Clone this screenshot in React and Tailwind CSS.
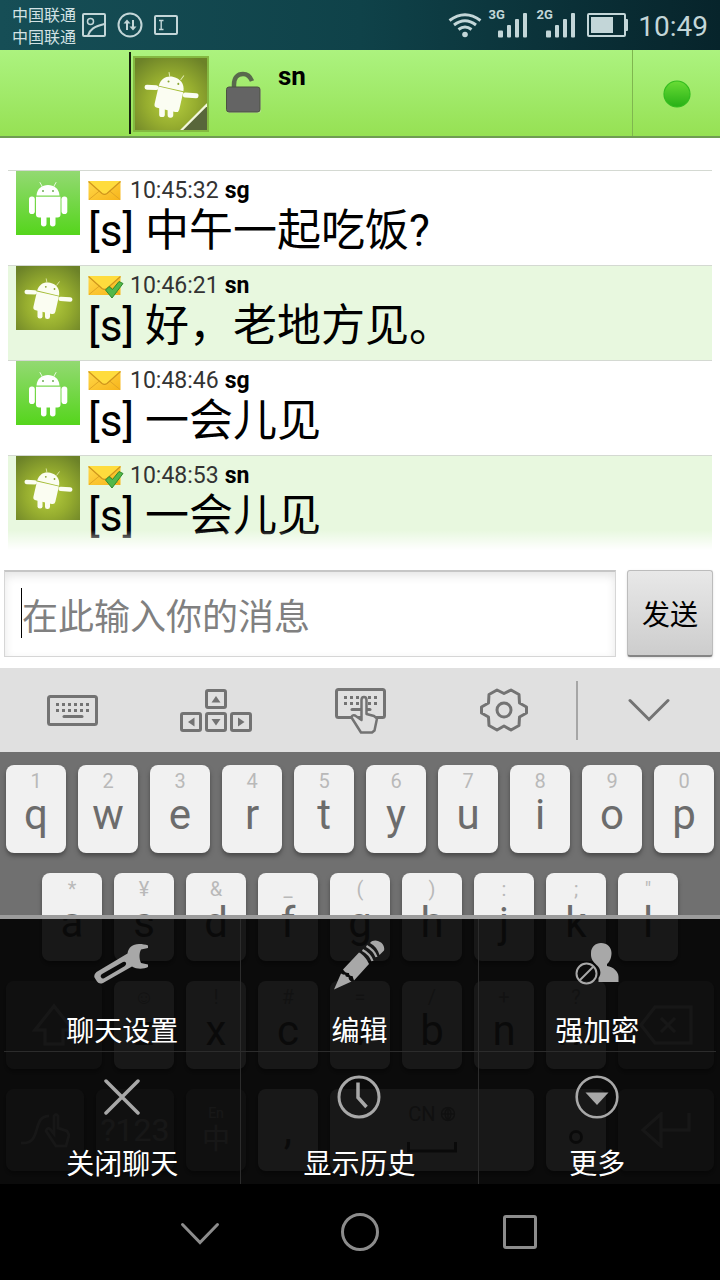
import React from "react";

const messages = [
  { time: "10:45:32", from: "sg", text: "[s] 中午一起吃饭?" },
  { time: "10:46:21", from: "sn", text: "[s] 好，老地方见。" },
  { time: "10:48:46", from: "sg", text: "[s] 一会儿见" },
  { time: "10:48:53", from: "sn", text: "[s] 一会儿见" },
];

const rowOne = [["q", "1"], ["w", "2"], ["e", "3"], ["r", "4"], ["t", "5"], ["y", "6"], ["u", "7"], ["i", "8"], ["o", "9"], ["p", "0"]];
const rowTwo = [["a", "*"], ["s", "¥"], ["d", "&"], ["f", "_"], ["g", "("], ["h", ")"], ["j", ":"], ["k", ";"], ["l", '"']];
const rowThree = [["z", "☺"], ["x", "!"], ["c", "#"], ["v", "="], ["b", "/"], ["n", "+"], ["m", "?"]];

function GreenRobot() {
  return (
    <svg viewBox="0 0 64 64" className="size-16 shrink-0" aria-hidden="true">
      <defs>
        <linearGradient id="lime" x1="0" y1="0" x2="0" y2="1">
          <stop offset="0" stopColor="#93d972" />
          <stop offset="1" stopColor="#55d51c" />
        </linearGradient>
      </defs>
      <rect width="64" height="64" fill="url(#lime)" />
      <g fill="#fff">
        <path d="M20.500 24.500C21 17.500 26 14 32 14s11 3.500 11.500 10.500z" />
        <path d="M20 25.800h24.500v17.700a3 3 0 0 1-3 3H23a3 3 0 0 1-3-3z" />
        <rect x="13" y="25.500" width="5.800" height="17.500" rx="2.800" />
        <rect x="45.500" y="25.500" width="5.800" height="17.500" rx="2.800" />
        <rect x="25" y="42" width="5.500" height="13.500" rx="2.700" />
        <rect x="34" y="42" width="5.500" height="13.500" rx="2.700" />
      </g>
      <path d="M26.500 16l-2.500-4.500M37.500 16l2.500-4.500" stroke="#e9f9df" strokeWidth="1" strokeLinecap="round" />
      <circle cx="27" cy="20" r="1" fill="#6fae55" />
      <circle cx="37" cy="20" r="1" fill="#6fae55" />
    </svg>
  );
}

function OliveRobot({ className, id, corner }) {
  return (
    <svg viewBox="0 0 64 64" className={className} aria-hidden="true">
      <defs>
        <radialGradient id={id} cx="0.5" cy="0.6" r="0.7">
          <stop offset="0" stopColor="#b8d040" />
          <stop offset="0.5" stopColor="#96ad2f" />
          <stop offset="1" stopColor="#6c8228" />
        </radialGradient>
      </defs>
      <rect width="64" height="64" fill={`url(#${id})`} />
      <g transform="rotate(13 31 33)" fill="#fbfdf2">
        <path d="M19.500 27c.5-7 5-10.500 11-10.500S41.500 20 42 27z" />
        <path d="M19.500 27.900H42V43.500a3 3 0 0 1-3 3H22.500a3 3 0 0 1-3-3z" />
      </g>
      <g fill="#fbfdf2">
        <rect x="21.500" y="41" width="5" height="11.500" rx="2.300" />
        <rect x="29" y="42" width="5" height="11" rx="2.300" />
        <rect x="8.500" y="24" width="12.500" height="4.300" rx="2.100" transform="rotate(2 15 26)" />
        <rect x="42.500" y="31" width="14" height="4.500" rx="2.200" transform="rotate(4 50 33)" />
      </g>
      <circle cx="29.800" cy="20.800" r="0.900" fill="#8aa532" />
      <circle cx="38.500" cy="23" r="0.900" fill="#8aa532" />
      <path d="M31 17l-.8-4.500M40.500 19.500l3-4" stroke="#dfe9b0" strokeWidth="0.900" />
      {corner && (
        <g>
          <path d="M64 42L42 64h22z" fill="#58663a" />
          <path d="M64.500 41L41 64.500" stroke="#f2f7dc" strokeWidth="2" />
        </g>
      )}
    </svg>
  );
}

function Envelope({ checked }) {
  return (
    <svg viewBox="0 0 36 26" className="h-[26px] w-9 shrink-0" aria-hidden="true">
      <defs>
        <linearGradient id="gold" x1="0" y1="0" x2="1" y2="1">
          <stop offset="0" stopColor="#ffd84a" />
          <stop offset="1" stopColor="#f7b51a" />
        </linearGradient>
      </defs>
      <rect x="0.500" y="3" width="32" height="19" fill="url(#gold)" />
      <path d="M1 21.500L12 12.500M32 21.500L21 12.500" stroke="#e0a524" strokeWidth="1" />
      <path d="M0.500 3h32L18.500 15.500q-2 1.500-4 0z" fill="#ffdc3d" />
      <path d="M0.500 3.500L14 15.500q2.500 1.800 5 0L32.500 3.500" fill="none" stroke="#cf961c" strokeWidth="1.200" />
      {checked && (
        <path d="M17.500 17l3.500-3.500 3.500 3 6.500-8 4 2-11 14.500z" fill="#52b84a" stroke="#2f8a2e" strokeWidth="1" />
      )}
    </svg>
  );
}

function StatusBar() {
  return (
    <div className="flex h-[50px] items-center bg-linear-to-r from-[#164e56] via-[#0f4249] to-[#07242b] pr-3 pl-3 text-[#c3d6d8]">
      <div className="font-['Noto_Sans_CJK_SC',sans-serif] text-base leading-[22px] text-[#d3e2e4]">
        <div>中国联通</div>
        <div>中国联通</div>
      </div>
      <svg viewBox="82 8 98 34" className="ml-1.5 h-[34px] w-[98px]" fill="none" stroke="currentColor" strokeWidth="2" aria-hidden="true">
        <rect x="83" y="14" width="22" height="22" rx="1" />
        <circle cx="90.500" cy="21.500" r="3" strokeWidth="1.500" />
        <path d="M88 35.500c2-6 6-9 16.500-11.500" />
        <circle cx="130" cy="25" r="11.500" />
        <path d="M127 30v-8M133 20v8" />
        <path d="M123.500 23.500l3.500-4 3.500 4zM129.500 26.500l3.500 4 3.500-4z" fill="currentColor" stroke="none" />
        <rect x="155" y="16" width="22" height="18" rx="1" />
        <path d="M159 20.500h4.500M159 29.500h4.500M161.200 20.500v9" strokeWidth="1.400" />
      </svg>
      <svg viewBox="446 8 184 34" className="ml-auto h-[34px] w-[184px]" fill="none" stroke="currentColor" aria-hidden="true">
        <g strokeWidth="3">
          <path d="M449.500 20.500q15.500-11.500 31 0" />
          <path d="M454 25q11-8.500 22 0" />
          <path d="M458.500 29.500q6.500-5 13 0" />
        </g>
        <g fill="currentColor" stroke="none">
          <circle cx="465" cy="34.500" r="2.800" />
          <rect x="498" y="30.500" width="5" height="7" rx="1" />
          <rect x="507" y="25" width="4" height="12.500" rx="1" />
          <rect x="515" y="19" width="4" height="18.500" rx="1" />
          <rect x="523" y="13" width="4" height="24.500" rx="1" />
          <rect x="546" y="30.500" width="5" height="7" rx="1" />
          <rect x="555" y="25" width="4" height="12.500" rx="1" />
          <rect x="563" y="19" width="4" height="18.500" rx="1" />
          <rect x="571" y="13" width="4" height="24.500" rx="1" />
          <rect x="591" y="17" width="22" height="16" />
          <rect x="625" y="19" width="3" height="12" rx="1" />
          <text x="488.500" y="19" className="font-[Roboto] text-[13px] font-bold">3G</text>
          <text x="536.500" y="19" className="font-[Roboto] text-[13px] font-bold">2G</text>
        </g>
        <rect x="588" y="14" width="37" height="22" rx="1" strokeWidth="2" />
      </svg>
      <div className="mt-1 ml-2 text-[28px] leading-[34px]">10:49</div>
    </div>
  );
}

function ChatHeader() {
  return (
    <header className="flex h-[88px] border-b-2 border-[#6f9c52] bg-linear-to-b from-[#acf37f] to-[#96e153]">
      <div className="my-0.5 w-[131px] border-r-2 border-[#16240d]" />
      <div className="flex flex-1 items-start pl-0.5">
        <div className="mt-1.5 border-2 border-[#84b941]">
          <OliveRobot id="oliveHead" className="size-[72px]" corner />
        </div>
        <svg viewBox="224 70 40 46" className="mt-5 ml-[15px] h-[46px] w-10" aria-hidden="true">
          <path d="M234 89v-4.500c0-7 3.500-10.500 9-10.500 4 0 7 2 9 7" fill="none" stroke="#59694c" strokeWidth="4.500" strokeLinecap="butt" />
          <rect x="227" y="88" width="34" height="25" rx="2.500" fill="#b9e58e" />
          <rect x="226.500" y="87" width="33.500" height="25" rx="2.500" fill="#646464" stroke="#4b5240" strokeWidth="1" />
        </svg>
        <h1 className="mt-[11px] ml-3.5 text-[26px] leading-[30px] font-bold text-black">sn</h1>
      </div>
      <div className="flex w-[88px] items-center justify-center border-l border-[#7fb64f]">
        <svg viewBox="0 0 28 28" className="mt-0.5 size-7" role="img" aria-label="在线">
          <defs>
            <linearGradient id="dot" x1="0" y1="0" x2="0" y2="1">
              <stop offset="0" stopColor="#69dc35" />
              <stop offset="1" stopColor="#27b016" />
            </linearGradient>
          </defs>
          <circle cx="14" cy="14" r="13" fill="url(#dot)" stroke="#33bd1f" strokeWidth="1.200" />
        </svg>
      </div>
    </header>
  );
}

function Messages() {
  return (
    <main className="flex-1 px-2 pt-8 pb-5">
      <ul className="relative">
        {messages.map((m, i) => (
          <li key={m.time} className={`flex border-t border-[#d4d9d2] pb-[9px] pl-2 ${m.from === "sn" ? "bg-[#e8f8df]" : "bg-white"}`}>
            {m.from === "sn" ? <OliveRobot id={`olive${i}`} className="size-16 shrink-0" /> : <GreenRobot />}
            <div className="pt-[5px] pl-2 text-black">
              <div className="flex h-[30px] items-center gap-1.5 text-[23px] leading-[30px]">
                <Envelope checked={m.from === "sn"} />
                <time className="text-[#333]">{m.time}</time>
                <b>{m.from}</b>
              </div>
              <p className="text-[44px] leading-[50px]">{m.text}</p>
            </div>
          </li>
        ))}
        <li aria-hidden="true" className="absolute inset-x-0 bottom-0 h-5 bg-linear-to-b from-white/0 to-white" />
      </ul>
    </main>
  );
}

function Composer() {
  return (
    <form className="flex gap-[11px] pr-[7px] pb-[11px] pl-1" onSubmit={(e) => e.preventDefault()}>
      <div className="relative flex flex-1">
        <input
          type="text"
          aria-label="消息"
          placeholder="在此输入你的消息"
          className="h-[87px] w-full border border-t-2 border-[#d6d6d6] border-t-[#c6c6c6] bg-white pl-[17px] font-['Noto_Sans_CJK_SC',sans-serif] text-4xl text-black caret-transparent shadow-[inset_0_4px_10px_#e6e6e6] outline-none placeholder:text-[#808080]"
        />
        <span className="absolute top-[18px] left-[17px] h-[50px] w-px bg-black" />
      </div>
      <button type="submit" className="h-[87px] w-[86px] rounded-[3px] border border-[#bcbcbc] border-b-2 border-b-[#858585] bg-linear-to-b from-[#e8e8e8] to-[#cdcdcd] font-['Noto_Sans_CJK_SC',sans-serif] text-[28px] text-black shadow-sm">
        发送
      </button>
    </form>
  );
}

function KeyboardDots() {
  const dots = [];
  for (let r = 0; r < 2; r++) for (let c = 0; c < 6; c++) dots.push(<rect key={`${r}-${c}`} x={9 + c * 6} y={8 + r * 6} width="3" height="3" fill="#737373" stroke="none" />);
  return (
    <g>
      <rect x="1.500" y="1.500" width="48" height="28" rx="2" />
      {dots}
      <path d="M17 21.500h18" strokeLinecap="round" />
    </g>
  );
}

const toolButton = "flex h-[84px] flex-1 items-center justify-center";

function Toolbar() {
  return (
    <div className="flex bg-[#e0e0e0]">
      <button className={toolButton} aria-label="键盘">
        <svg viewBox="0 0 51 31" className="h-[31px] w-[51px]" fill="none" stroke="#737373" strokeWidth="3"><KeyboardDots /></svg>
      </button>
      <button className={toolButton} aria-label="光标">
        <svg viewBox="0 0 72 44" className="h-11 w-[72px]" fill="none" stroke="#737373" strokeWidth="3">
          <rect x="26.500" y="2.500" width="19" height="17" rx="1.500" />
          <rect x="1.500" y="25.500" width="19" height="17" rx="1.500" />
          <rect x="26.500" y="25.500" width="19" height="17" rx="1.500" />
          <rect x="51.500" y="25.500" width="19" height="17" rx="1.500" />
          <g fill="#737373" stroke="none">
            <path d="M31.500 14.500h9L36 8z" />
            <path d="M31.500 31h9L36 37.500z" />
            <path d="M14.500 29.500v9L8 34z" />
            <path d="M58 29.500v9l6.500-4.500z" />
          </g>
        </svg>
      </button>
      <button className={toolButton} aria-label="手写">
        <svg viewBox="0 0 51 47" className="mt-0.5 h-[47px] w-[51px]" fill="none" stroke="#737373" strokeWidth="3">
          <KeyboardDots />
          <path d="M26 44.500L16.500 29.500Q17 26.500 20 27.500L26.500 32V12q0-3 2.500-3t2.500 3v14l7.500 2 3 2.500-2.500 12-2.500 2z" fill="#e0e0e0" strokeWidth="2.500" strokeLinejoin="round" />
        </svg>
      </button>
      <button className={toolButton} aria-label="设置">
        <svg viewBox="0 0 48 44" className="h-11 w-12" fill="none" stroke="#737373" strokeWidth="3" strokeLinejoin="round">
          <path d="M24 5.500L31 2l8 4.500.5 8.500 7 4v6l-7 4-.5 8.500-8 4.500-7-4-7 4-8-4.500-.5-8.500-7-4v-6l7-4L9 6.500 17 2z" />
          <circle cx="24" cy="22" r="7" />
        </svg>
      </button>
      <div className="flex flex-1 items-center">
        <span className="h-[59px] w-0.5 shrink-0 bg-[#a6a6a6]" />
        <button className={toolButton} aria-label="收起">
          <svg viewBox="0 0 42 24" className="h-6 w-[42px]" fill="none" stroke="#737373" strokeWidth="3" strokeLinecap="round"><path d="M2 2.500l19 19 19-19" /></svg>
        </button>
      </div>
    </div>
  );
}

function Key({ label, hint, width = "w-[10%]" }) {
  return (
    <div className={`${width} px-1.5`}>
      <button className="flex h-[88px] w-full flex-col items-center rounded-lg bg-[#f1f1f1] pt-[5px] shadow-[0_3px_4px_#4a4a4a]">
        <span className="h-[22px] text-xl leading-[22px] text-[#b9b9b9]">{hint}</span>
        <span className="text-[42px] leading-[46px] text-[#6c6c6c]">{label}</span>
      </button>
    </div>
  );
}

function WideKey({ width, tall, light, name, children }) {
  return (
    <div className={`${width} px-1.5`}>
      <button
        aria-label={name}
        className={`flex w-full flex-col items-center justify-center rounded-lg shadow-[0_3px_4px_#4a4a4a] ${tall ? "h-[88px]" : "h-[82px]"} ${light ? "bg-[#f1f1f1] text-[#6c6c6c]" : "bg-[#a4a4a4] text-[#ececec]"}`}
      >
        {children}
      </button>
    </div>
  );
}

function Keyboard() {
  return (
    <div className="flex flex-col gap-5 bg-[#707070] py-[13px]">
      <div className="flex">{rowOne.map(([l, h]) => <Key key={l} label={l} hint={h} />)}</div>
      <div className="flex justify-center">{rowTwo.map(([l, h]) => <Key key={l} label={l} hint={h} />)}</div>
      <div className="flex">
        <WideKey width="w-[15%]" tall name="Shift">
          <svg viewBox="0 0 44 44" className="size-11" fill="none" stroke="currentColor" strokeWidth="3"><path d="M22 3L3 27h10v14h18V27h10z" /></svg>
        </WideKey>
        {rowThree.map(([l, h]) => <Key key={l} label={l} hint={h} />)}
        <WideKey width="w-[15%]" tall name="退格">
          <svg viewBox="0 0 54 40" className="h-10 w-[54px]" fill="none" stroke="currentColor" strokeWidth="3"><path d="M16 2h36v36H16L2 20zM22 13l14 14M36 13L22 27" /></svg>
        </WideKey>
      </div>
      <div className="flex">
        <WideKey width="w-[12.5%]" name="滑行">
          <svg viewBox="0 0 50 36" className="h-9 w-[50px]" fill="none" stroke="currentColor" strokeWidth="2.500">
            <path d="M1 31c22 2 10-27 28-27" />
            <path d="M36 34L26 19q1-4 4-2l4 5V4q2-3 4 0v12l9 3 2 4-3 11z" />
          </svg>
        </WideKey>
        <WideKey width="w-[12.5%]"><span className="text-[32px]">?123</span></WideKey>
        <WideKey width="w-[10%]">
          <span className="text-sm">En</span>
          <span className="text-[28px] leading-[34px]">中</span>
        </WideKey>
        <WideKey width="w-[10%]" light><span className="text-[42px] leading-[46px]">,</span></WideKey>
        <WideKey width="w-[30%]" light name="空格">
          <span className="flex items-center gap-1 pb-2 text-xl leading-6 text-[#a0a0a0]">
            CN
            <svg viewBox="0 0 16 16" className="size-4" fill="none" stroke="currentColor" strokeWidth="1.500"><circle cx="8" cy="8" r="6.500" /><path d="M2 8h12M8 1.500v13M8 1.500q-6 6.500 0 13M8 1.500q6 6.500 0 13" /></svg>
          </span>
          <svg viewBox="0 0 50 24" className="h-6 w-[50px]" fill="none" stroke="currentColor" strokeWidth="3"><path d="M1.500 8v9h47V8" /></svg>
        </WideKey>
        <WideKey width="w-[10%]" light name="句号">
          <svg viewBox="0 0 14 28" className="h-7 w-3.5" fill="none" stroke="currentColor" strokeWidth="3"><circle cx="7" cy="21" r="5.500" /></svg>
        </WideKey>
        <WideKey width="w-[15%]" name="回车">
          <svg viewBox="0 0 50 36" className="h-9 w-[50px]" fill="none" stroke="currentColor" strokeWidth="3"><path d="M20 2v32L2 18zM20 18h28V1" /></svg>
        </WideKey>
      </div>
    </div>
  );
}

const menuItems = [
  {
    label: "聊天设置",
    icon: (
      <svg viewBox="95 942 56 44" className="h-11 w-14">
        <path
          fillRule="evenodd"
          fill="#a8a8a8"
          d="M149 945.500v2.500l-7 1.500c-2 3.500-2 9.500 0 13.500l7 1.500v2.500c-4 2-11 2.500-16-.5L104 983q-4 1.500-6-1.500l-2.500-4q-1-3 2-5.500l31-18.500c1-6 5-9.500 11.500-9.500 3.500 0 6.500.5 9 1.500zM103 974q-2 1.500-1 3.300t3 1l20.500-12q2-1.500 1.500-3.300t-3-1z"
        />
      </svg>
    ),
  },
  {
    label: "编辑",
    icon: (
      <svg viewBox="333 937 52 52" className="size-[52px]" fill="#a8a8a8">
        <path d="M334 988.500l7-16q2 1.500 4 1 .5 3 3.500 2.500 0 3 3 4.500z" />
        <path d="M343 968.500l16-17c4 2 8 6.500 10 11.500l-15 16.500-1.500-4.500q-3.500.5-3.500-3-3.500.5-6-3.500z" />
        <path d="M370 942c5-6 16 0 14 7.500l-4.500 4.500c-1.500-5.500-4.500-9.500-9.500-12z" />
        <path d="M362.500 949q7.500 4 10 11M366.500 945q7.500 4 10 11" fill="none" stroke="#a8a8a8" strokeWidth="2.200" />
      </svg>
    ),
  },
  {
    label: "强加密",
    icon: (
      <svg viewBox="574 941 46 46" className="size-[46px]">
        <path d="M601 943c6 0 10.500 4 10.500 10 0 5-2 9-4.500 11v2c6 1 11.500 5 11.500 11v5h-20v-4c4-5 1-11-2-13-3-3-6-6-5.500-12 0-6 4.500-10 10-10z" fill="#a8a8a8" />
        <g fill="none" stroke="#a8a8a8" strokeWidth="2"><circle cx="586.500" cy="973.500" r="10" /><path d="M579.500 980.500l14-14" /></g>
      </svg>
    ),
  },
  {
    label: "关闭聊天",
    icon: <svg viewBox="0 0 36 36" className="size-9" stroke="#a8a8a8" strokeWidth="3.500" strokeLinecap="round"><path d="M2 2l32 32M34 2L2 34" /></svg>,
  },
  {
    label: "显示历史",
    icon: (
      <svg viewBox="0 0 44 44" className="size-11" fill="none" stroke="#a8a8a8" strokeWidth="3"><circle cx="22" cy="22" r="20" /><path d="M21 7.500v15l8.500 9.500" strokeWidth="3.500" /></svg>
    ),
  },
  {
    label: "更多",
    icon: <svg viewBox="0 0 44 44" className="size-11"><circle cx="22" cy="22" r="20.300" fill="none" stroke="#a8a8a8" strokeWidth="2.600" /><path d="M10.500 17.500h23L22 30z" fill="#a8a8a8" /></svg>,
  },
];

function OptionsMenu() {
  return (
    <nav className="absolute inset-x-0 bottom-0 border-t-4 border-[#9c9c9c]">
      <div className="grid grid-cols-3 bg-black/90 px-1">
        {menuItems.map(({ label, icon }, i) => (
          <button
            key={label}
            className={`flex flex-col items-center pt-[19px] pb-0.5 ${i < 3 ? "border-b border-[#2c2c2c]" : ""} ${i % 3 < 2 ? "border-r border-r-[#2c2c2c]" : ""}`}
          >
            <span className="flex h-[52px] items-center">{icon}</span>
            <span className="mt-[19px] h-10 font-['Noto_Sans_CJK_SC',sans-serif] text-[28px] leading-10 text-white">{label}</span>
          </button>
        ))}
      </div>
    </nav>
  );
}

function NavigationBar() {
  return (
    <div className="flex h-24 items-center justify-center gap-[116px] bg-black text-[#8c8c8c]">
      <button className="flex w-11 justify-center" aria-label="返回">
        <svg viewBox="0 0 40 24" className="mt-1 h-6 w-10" fill="none" stroke="currentColor" strokeWidth="3" strokeLinecap="round"><path d="M2.500 2.500L20 20.500l17.500-18" /></svg>
      </button>
      <button className="flex w-11 justify-center" aria-label="主页">
        <svg viewBox="0 0 40 40" className="size-10" fill="none" stroke="currentColor" strokeWidth="3"><circle cx="20" cy="20" r="17.500" /></svg>
      </button>
      <button className="flex w-11 justify-center" aria-label="最近任务">
        <svg viewBox="0 0 34 34" className="size-[34px]" fill="none" stroke="currentColor" strokeWidth="3"><rect x="1.500" y="1.500" width="31" height="31" rx="1.500" /></svg>
      </button>
    </div>
  );
}

export default function App() {
  return (
    <div className="flex min-h-screen flex-col bg-white font-[Roboto,'Noto_Sans_CJK_SC',sans-serif]">
      <StatusBar />
      <ChatHeader />
      <Messages />
      <Composer />
      <Toolbar />
      <div className="relative">
        <Keyboard />
        <OptionsMenu />
      </div>
      <NavigationBar />
    </div>
  );
}
